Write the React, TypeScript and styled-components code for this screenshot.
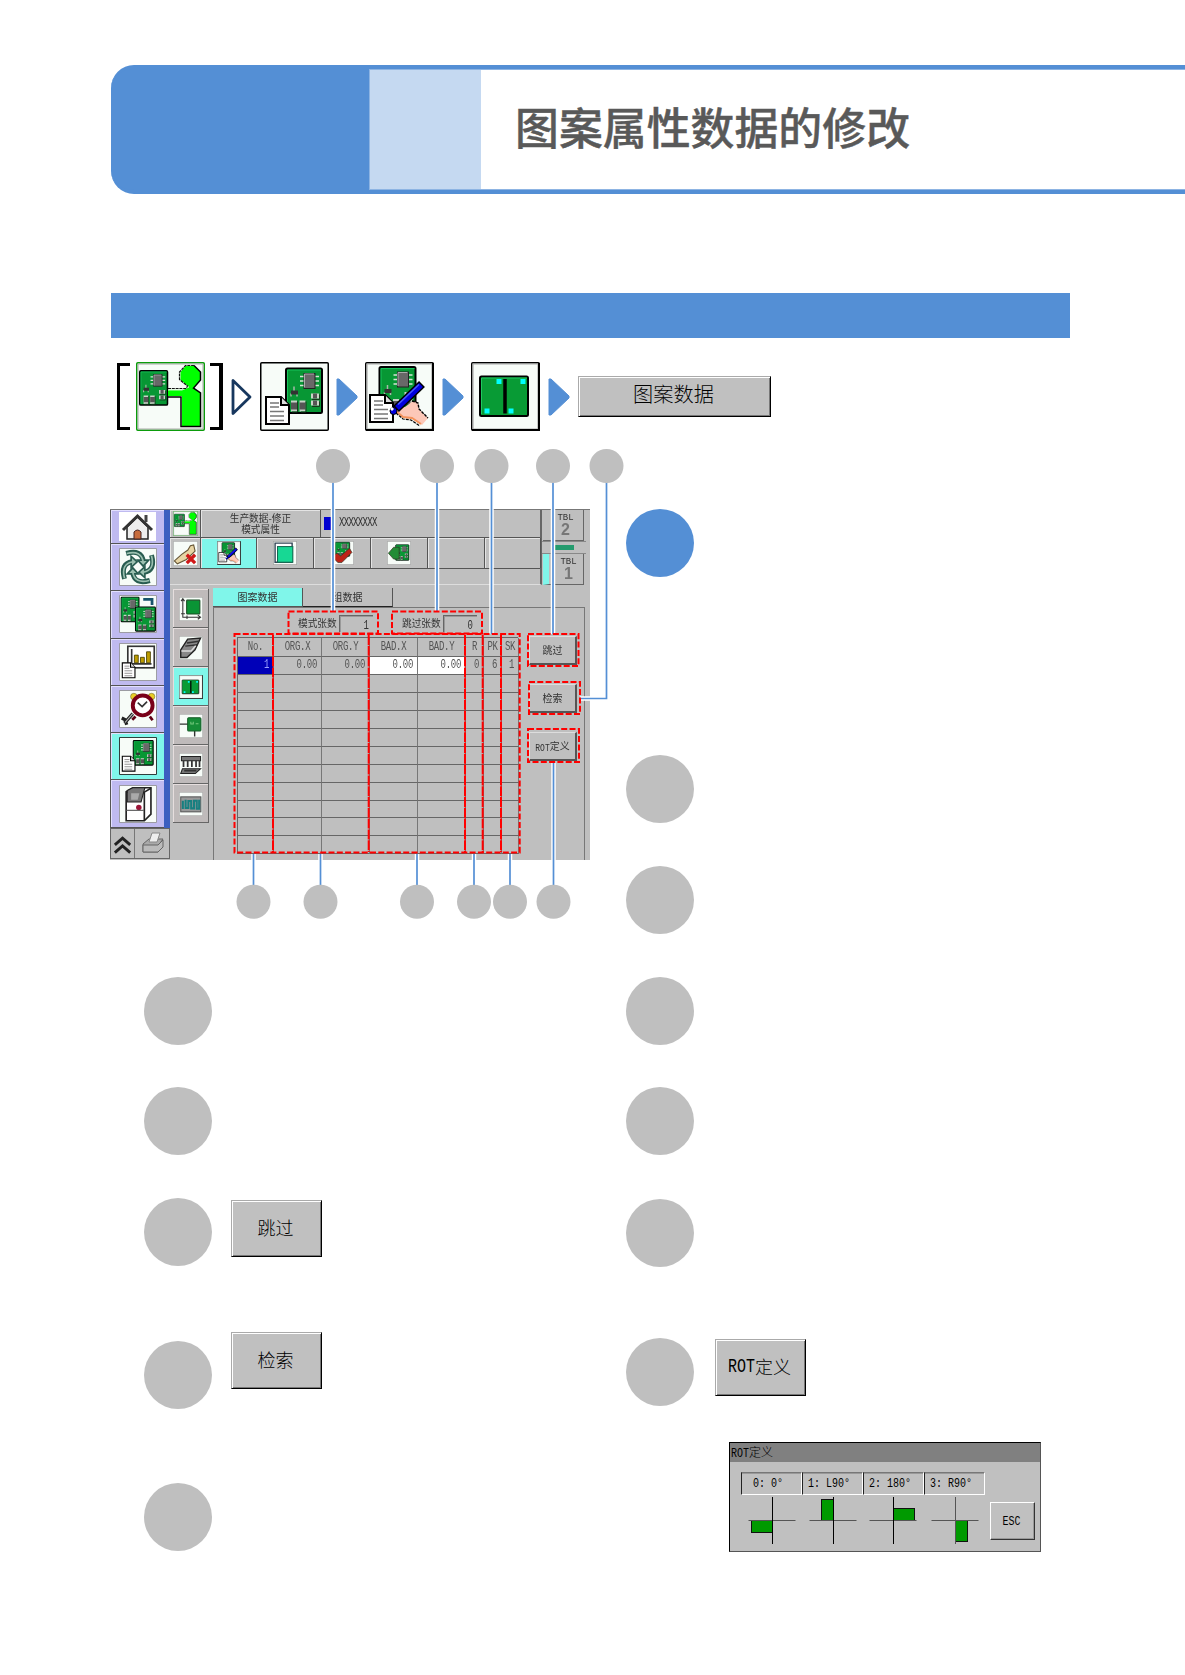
import { ReactNode } from 'react'
import styled, { createGlobalStyle } from 'styled-components'

const BLUE = '#548fd5'
const GREY = '#bfbfbf'
const CYAN = '#80f6ea'

interface BoxProps {
  $top?: number
  $left?: number
  $width?: number
  $height?: number
  $active?: boolean
  $size?: number
}

const GlobalStyle = createGlobalStyle`
  * {
    box-sizing: border-box;
  }

  body {
    margin: 0;
    background: #fff;
    font-family: 'Liberation Sans', 'Noto Sans CJK SC', sans-serif;
    color: #000;
  }

  svg {
    display: block;
    flex: none;
  }
`

const Page = styled.main`
  width: 1185px;
  height: 1675px;
  padding: 65px 0 0 111px;
  overflow: hidden;
`

const Header = styled.header`
  display: flex;
  height: 129px;
  border: solid ${BLUE};
  border-width: 4px 0 4px 0;
  border-radius: 23px 0 0 23px;
  background: linear-gradient(to right, ${BLUE} 258px, #fff 258px);
`

const HeaderTint = styled.div`
  width: 112px;
  margin-left: 258px;
  background: #c5d9f1;
  border: 1px solid #8db4e3;
  border-right: 0;
`

const Title = styled.h1`
  flex: 1;
  margin: 0;
  padding-left: 34px;
  font: 500 43.9px/113px 'Noto Sans CJK SC', sans-serif;
  color: #595959;
  white-space: nowrap;
  -webkit-text-stroke: 0.4px #595959;
  border: solid #8db4e3;
  border-width: 1px 0;
`

const SectionBar = styled.div`
  width: 959px;
  height: 45px;
  margin-top: 99px;
  background: ${BLUE};
`

const Steps = styled.nav`
  display: flex;
  align-items: center;
  height: 69px;
  margin-top: 24px;
  padding-left: 6px;
`

const Bracket = styled.span<{ $close?: boolean }>`
  width: 13px;
  height: 67px;
  border: 3px solid #000;
  border-left-width: ${({ $close }) => ($close ? 0 : 3)}px;
  border-right-width: ${({ $close }) => ($close ? 4 : 0)}px;
  margin: ${({ $close }) => ($close ? '0 1px 0 5px' : '0 6px 0 0')};
`

const Arrow = styled.svg<{ $before: number; $after: number }>`
  width: 22px;
  height: 38px;
  margin: 0 ${({ $after }) => $after}px 0 ${({ $before }) => $before}px;
`

const Button = styled.button<BoxProps>`
  display: flex;
  align-items: center;
  justify-content: center;
  flex: none;
  width: ${({ $width }) => $width || 91}px;
  height: ${({ $height }) => $height || 57}px;
  margin: ${({ $top }) => $top || 0}px 0 0 ${({ $left }) => $left || 0}px;
  padding: 0 2px 4px 0;
  border: 1px solid;
  border-color: #aaa #000 #000 #aaa;
  box-shadow: inset 1px 1px #fff, inset -1px -1px #777;
  background: #c0c0c0;
  color: #000;
  font: 300 ${({ $size }) => $size || 18}px/1 'Noto Sans CJK SC', sans-serif;
`

const HalfWidth = styled.span<{ $size: number; $shift?: number }>`
  display: inline-block;
  font: ${({ $size }) => $size}px/1 'Liberation Mono', monospace;
  transform: translateY(${({ $shift }) => $shift || 0}px) scaleY(1.35);
`

const Columns = styled.div`
  display: flex;
  margin-top: 18px;
`

const Column = styled.section<{ $width: number }>`
  display: flex;
  flex-direction: column;
  width: ${({ $width }) => $width}px;
`

const Figure = styled.figure`
  position: relative;
  width: 515px;
  height: 470px;
  margin: 0;
  padding-top: 60px;
`

const Overlay = styled.svg`
  position: absolute;
  left: -1px;
  top: 0;
`

const Note = styled.div<BoxProps>`
  display: flex;
  align-items: flex-start;
  height: 68px;
  margin: ${({ $top }) => $top}px 0 0 ${({ $left }) => $left || 0}px;
`

const Bullet = styled.span<BoxProps>`
  flex: none;
  width: 68px;
  height: 68px;
  border-radius: 50%;
  background: ${({ $active }) => ($active ? BLUE : GREY)};
`

/* machine screen */

const Screen = styled.div`
  display: flex;
  width: 480px;
  height: 351px;
  margin-left: -1px;
  background: #bfbfbf;
  border-top: 1px solid #777;
  filter: blur(0.5px);
  font: 10px/1 'Noto Sans CJK SC', sans-serif;
  color: #333;
`

const Nav = styled.div`
  width: 60px;
  flex: none;
`

const NavList = styled.div`
  border-right: 6px solid #3c5fc0;
  border-left: 1px solid #555;
`

const NavCell = styled.div<BoxProps>`
  display: flex;
  align-items: center;
  justify-content: center;
  height: ${({ $height }) => $height || 47.3}px;
  border-bottom: 1px solid #555;
  box-shadow: inset 1px 1px #e3e0ff;
  background: ${({ $active }) => ($active ? CYAN : '#bfbaf0')};
`

const NavFoot = styled.div`
  display: grid;
  grid-template-columns: 24px 36px;
  height: 31px;
  place-items: center;
  border: 1px solid #666;

  svg:first-child {
    border-right: 1px solid #777;
  }
`

const Main = styled.div`
  flex: 1;
  min-width: 0;
`

const Top = styled.div`
  display: flex;
  height: 75px;
`

const TopLeft = styled.div`
  width: 372px;
  height: 75px;
  border-right: 2px solid #666;
  border-bottom: 1px solid #ddd;
`

const Bar = styled.div<BoxProps>`
  display: flex;
  height: ${({ $height }) => $height}px;
  border-bottom: 1px solid #555;
`

const BarCell = styled.div<BoxProps>`
  display: flex;
  flex-direction: column;
  align-items: center;
  justify-content: center;
  width: ${({ $width }) => $width}px;
  flex: none;
  border-right: 1px solid #555;
  box-shadow: inset 1px 1px #e4e4e4;
  background: ${({ $active }) => ($active ? CYAN : '#bfbfbf')};
`

const BarLine = styled.span`
  font-size: 9.7px;
  line-height: 10.5px;
`

const Model = styled.div`
  display: flex;
  align-items: center;
  padding-left: 3px;
  gap: 6px;
  letter-spacing: -0.7px;

  &:before {
    content: '';
    width: 9px;
    height: 13px;
    background: #0000d0;
  }
`

const Tables = styled.div`
  display: flex;
  flex-direction: column;
  align-items: center;
  width: 48px;
  padding-right: 5px;
`

const TableTag = styled.div<BoxProps>`
  width: 41px;
  height: 31px;
  padding: 4px 0 0 5px;
  border: solid #666;
  border-width: 0 1px 1px 0;
  border-left: ${({ $active }) => ($active ? `6px solid ${CYAN}` : '0')};
  text-align: center;
  font: 9px/8px 'Liberation Mono', monospace;

  b {
    display: block;
    font: 700 16px/16px 'Liberation Sans', sans-serif;
    color: #777;
  }
`

const Exchange = styled.div`
  width: 44px;
  height: 13px;
  padding: 3px 12px;
  border: solid #888;
  border-width: 1px 0;
  background: #259b6e content-box;
`

const Lower = styled.div`
  display: flex;
  height: 275px;
`

const Side = styled.div`
  width: 43px;
  padding: 4px 4px 0 3px;
`

const SideCell = styled.div<BoxProps>`
  display: flex;
  align-items: center;
  justify-content: center;
  height: 39px;
  padding-top: 1px;
  border: solid #666;
  border-width: 0 1px 1px 0;
  box-shadow: inset 1px 1px #e6dede;
  background: ${({ $active }) => ($active ? CYAN : '#bfbaba')};
`

const Work = styled.div`
  width: 372px;
`

const Tabs = styled.div`
  display: flex;
  height: 22px;
  padding-top: 3px;
`

const Tab = styled.div<BoxProps>`
  width: 90px;
  border-right: 1px solid #555;
  border-bottom: 1px solid ${({ $active }) => ($active ? '#555' : '#222')};
  background: ${({ $active }) => ($active ? CYAN : '#bfbfbf')};
  text-align: center;
  line-height: 18px;
`

const Panel = styled.div`
  height: 253px;
  border: solid #777;
  border-width: 1px 1px 0 1px;
`

const Counts = styled.div`
  display: flex;
  gap: 14px;
  height: 28px;
  padding: 6px 0 0 74px;
`

const Count = styled.div`
  display: flex;
  align-items: center;
  justify-content: space-between;
  width: 90px;
  height: 18px;
  padding: 1px 5px 0 10px;
  font-size: 9.7px;
  white-space: nowrap;
`

const CountValue = styled.span`
  width: 34px;
  height: 17px;
  padding: 4px 4px 0 0;
  border: solid #666;
  border-width: 1px 0 0 1px;
  box-shadow: inset 1px 1px #999;
  text-align: right;
`

const WorkBody = styled.div`
  display: flex;
  align-items: flex-start;
`

const DataGrid = styled.div`
  display: grid;
  grid-template-columns: 36px 48px 48px 48px 48px 18px 18px 17px;
  grid-template-rows: 19px repeat(11, 17.95px);
  width: 281px;
  margin: 1px 0 0 23px;
  border-left: 1px solid #666;
  border-top: 1px solid #666;
`

const Cell = styled.div<{ $fill?: string; $head?: boolean }>`
  border-right: 1px solid #777;
  border-bottom: 1px solid #666;
  padding: ${({ $head }) => ($head ? '2px 0 0' : '1px 4px 0 0')};
  background: ${({ $fill }) => $fill || 'transparent'};
  color: ${({ $fill }) => ($fill === '#0000b8' ? '#9aa0ff' : '#555')};
  line-height: 9px;
  letter-spacing: -0.3px;
  text-align: ${({ $head }) => ($head ? 'center' : 'right')};
  overflow: hidden;
`

const Keys = styled.div`
  display: flex;
  flex-direction: column;
  gap: 19px;
  margin-left: 11px;
`

const Key = styled.div`
  width: 48px;
  height: 29px;
  border: solid;
  border-width: 1px 2px 2px 1px;
  border-color: #ddd #555 #555 #ddd;
  text-align: center;
  line-height: 26px;
  white-space: nowrap;
`

/* rotation dialog */

const Dialog = styled.div`
  width: 312px;
  height: 110px;
  margin: 36px 0 0 103px;
  border: 1px solid #555;
  border-left-color: #000;
  border-top-color: #000;
  background: #c0c0c0;
  font: 300 12px/1 'Noto Sans CJK SC', sans-serif;
`

const DialogTitle = styled.div`
  height: 19px;
  padding: 3px 0 0 1px;
  background: #808080;
`

const DialogBody = styled.div`
  display: flex;
  padding: 10px 0 0 11px;
`

const Rotation = styled.div`
  width: 61px;
`

const RotationLabel = styled.div`
  height: 23px;
  border: 1px solid;
  border-color: #777 #fff #fff #222;
  box-shadow: inset 0 1px #999;
  padding: 5px 7px 0 0;
  text-align: center;
  white-space: pre;
`

const Esc = styled.div`
  width: 45px;
  height: 38px;
  margin: 30px 0 0 5px;
  padding-right: 2px;
  border: 1px solid;
  border-color: #fff #333 #333 #fff;
  box-shadow: inset -1px -1px #999;
  text-align: center;
  line-height: 36px;
`

const Pcb = ({ x = 0, y = 0, sx = 1, sy = 1 }) => (
  <g transform={`translate(${x} ${y}) scale(${sx} ${sy})`}>
    <rect x="1" y="1" width="36" height="44.5" rx="1.5" fill="#079734" stroke="#000" strokeWidth="2" />
    <path d="M2.5 44V2.5H36" fill="none" stroke="#16c35a" />
    <path d="M15 9h19M15 13.5h19M15 18h19" stroke="#d5e5d5" strokeWidth="1.6" />
    <rect x="19" y="6" width="11" height="15" fill="#686868" stroke="#222" />
    <path d="M19.5 20V6.5H29" fill="none" stroke="#aaa" />
    <path d="M9 19v5M6 29v-3M12 29v-3" stroke="#a8b8a8" strokeWidth="1.5" />
    <path d="M6 23h7v4H6z" fill="#333" />
    <path d="M6 33h6v11H6zM14.5 33h6v11h-6zM26 26h8v5h-8zM26 33h8v5h-8z" fill="#c8d4c8" />
    <path d="M6 35h6v7H6zM14.5 35h6v7h-6zM28 26h4v5h-4zM28 33h4v5h-4z" fill="#555" />
    <path d="M12.5 34v10.5H7M21 34v10.5h-5M34.5 27v5H27M34.5 34v5H27" fill="none" stroke="#153a1c" />
  </g>
)

const Doc = ({ x = 0, y = 0 }) => (
  <g transform={`translate(${x} ${y})`}>
    <path d="M1 1h15l8 8v19H1z" fill="#fff" stroke="#000" strokeWidth="2" />
    <path d="M16 1v8h8" fill="#ddd" stroke="#000" strokeWidth="2" />
    <path d="M5 7h9M5 11h9M5 15.5h14M5 20h14M5 24.5h14" stroke="#777" strokeWidth="1.4" />
  </g>
)

interface FrameProps {
  children: ReactNode
  size?: number
  stroke?: string
  bevel?: boolean
}

const Frame = ({ children, size = 69, stroke = '#000', bevel }: FrameProps) => (
  <svg width={size} height={size} viewBox="0 0 69 69">
    <rect x="0.75" y="0.75" width="67.5" height="67.5" rx="1" fill="#f7fcf8" stroke={stroke} strokeWidth="1.5" />
    {bevel && <path d="M2 67V2h65v65z" fill="none" stroke="#aaa" strokeWidth="1.2" />}
    {bevel && <path d="M1 68h67V1" fill="none" stroke="#000" strokeWidth="2" />}
    {children}
  </svg>
)

const Operator = ({ size = 69 }) => (
  <Frame size={size} stroke="#0b9c0b">
    <path d="M2 2h65v65H2z" fill="none" stroke="#aaa" />
    <Pcb x={3} y={8} sx={0.77} sy={0.77} />
    <path d="M49.5 4h9l6 6v8l-7 8 6.5 5v33H46V34H32v-6h14l7-3-8.5-7v-8z" fill="#0f0" />
    <path d="M32 28h14l7-3" fill="none" stroke="#c8f8c8" />
    <path d="M58 3.5l6.5 6.5v8L57.5 26l7 5v33.5H45V35H32" fill="none" stroke="#000" strokeWidth="1.5" />
    <path
      d="M32 26.5h18l1.5-2.5-8-6.5V10l6-6.5h9"
      fill="none"
      stroke="#111"
      strokeWidth="1.2"
      strokeDasharray="3 0.8"
    />
  </Frame>
)

const BoardDoc = ({ size = 69 }) => (
  <Frame size={size}>
    <Pcb x={25} y={5.5} />
    <Doc x={5} y={34} />
  </Frame>
)

const BoardEdit = ({ size = 69 }) => (
  <Frame size={size} bevel>
    <Pcb x={13.5} y={4} />
    <Doc x={4} y={32} />
    <path d="M31 46l9-1 8-6 5 2 1 6 9 9-6 7-9-6-9-1-8-6z" fill="#fcc8b8" />
    <path d="M47 39l6 2 1 6 9 9" fill="none" stroke="#000" strokeWidth="1.4" strokeDasharray="3 1" />
    <path d="M31 49l7 6 9 1 9 6" fill="none" stroke="#f5935c" strokeWidth="2" />
    <path d="M31 51l7 6 8 1 9 6" fill="none" stroke="#000" strokeWidth="1.2" strokeDasharray="3 1" />
    <path d="M57 22L31 47" stroke="#000" strokeWidth="8.5" />
    <path d="M56 23L32 46" stroke="#00d" strokeWidth="5.5" />
    <path d="M54 22.5L33 42.5" stroke="#4858ff" strokeWidth="1.5" />
    <circle cx="28.5" cy="49" r="3.5" fill="#00d" stroke="#000" />
    <path d="M25 47l2-2 2 2-2 2z" fill="#fff" />
  </Frame>
)

const BoardSplit = ({ size = 69 }) => (
  <Frame size={size} bevel>
    <rect x="9" y="14.5" width="48" height="39.5" rx="1.5" fill="#089b35" stroke="#000" strokeWidth="2" />
    <path d="M10.5 52V16H56" fill="none" stroke="#20c860" />
    <path d="M34 17v34.5" stroke="#000" strokeWidth="3.5" />
    <path d="M25.5 17h5v5h-5zM49.5 17h5v5h-5zM13.5 46.5h5v5h-5zM37.5 46.5h5v5h-5z" fill="#0ff" />
  </Frame>
)

const Home = () => (
  <svg width="37" height="29" viewBox="0 0 37 29">
    <rect width="37" height="29" fill="#fff" />
    <path d="M8 15v12h21V15L18.5 5z" fill="#eee" stroke="#222" strokeWidth="1.5" />
    <path d="M4 18L18.5 4 33 18" fill="none" stroke="#333" strokeWidth="3" />
    <path d="M27 3v7" stroke="#444" strokeWidth="3" />
    <path d="M15 27v-7q3.5-4 7 0v7z" fill="#c66b3d" stroke="#422" />
  </svg>
)

const turns = [0, 90, 180, 270]

const Cycle = () => (
  <Frame size={38} stroke="#888">
    {turns.map((turn) => (
      <g key={turn} transform={`rotate(${turn} 34.5 34.5)`}>
        <path d="M13 10q28-8 31 14" fill="none" stroke="#285c50" strokeWidth="9" />
        <path d="M34 22h20l-10 11z" fill="#9cc0b0" stroke="#285c50" strokeWidth="3" />
        <path d="M14 10q26-7 30 15" fill="none" stroke="#9cc0b0" strokeWidth="3" />
      </g>
    ))}
  </Frame>
)

const Boards = () => (
  <Frame size={38} stroke="#888">
    <Pcb x={3} y={3} sx={0.9} sy={1} />
    <path d="M44 8h16v10" fill="none" stroke="#17536c" strokeWidth="5" />
    <Pcb x={29} y={21} sx={1} sy={0.98} />
  </Frame>
)

const Report = () => (
  <Frame size={38} stroke="#888">
    <rect x="16" y="6" width="48" height="39" fill="#fff" stroke="#333" strokeWidth="3" />
    <path d="M23 11v27h36" fill="none" stroke="#333" strokeWidth="3" />
    <path d="M28 22h7v14h-7zM39 26h7v10h-7zM50 16h7v20h-7z" fill="#bd9c00" stroke="#443b00" strokeWidth="1.5" />
    <Doc x={5} y={35} />
  </Frame>
)

const Alarm = () => (
  <Frame size={38} stroke="#888">
    <path d="M30 48l-6 6M56 48l5 7" stroke="#600015" strokeWidth="5" />
    <circle cx="27" cy="12" r="6" fill="#e9cd25" stroke="#663" />
    <circle cx="59" cy="12" r="6" fill="#e9cd25" stroke="#663" />
    <circle cx="43" cy="28" r="18" fill="#fff" stroke="#790019" strokeWidth="7" />
    <path d="M34 23l8 7 9-9" fill="none" stroke="#333" strokeWidth="3" />
    <path d="M25 43L10 60M5 51l6 3 3 9" fill="none" stroke="#222" strokeWidth="6" />
    <path d="M25 43L11 59" stroke="#bbb" strokeWidth="2" />
  </Frame>
)

const Machine = () => (
  <Frame size={38} stroke="#888">
    <path d="M13 12L25 5h33v48L46 65H13z" fill="#fff" stroke="#222" strokeWidth="3" />
    <path d="M13 13h33v51M46 13L58 6" fill="none" stroke="#222" strokeWidth="3" />
    <path d="M15 10l10-5h22L40 31H15z" fill="#777" stroke="#222" strokeWidth="2" />
    <path d="M22 15h15l-3 12H22z" fill="#aaa" />
    <circle cx="36" cy="41" r="5" fill="#9c1538" />
    <path d="M13 46h32" stroke="#555" strokeWidth="2" />
  </Frame>
)

const Cancel = () => (
  <Frame size={25} stroke="#888">
    <path d="M4 55l20-18 17-12 7-12 9-2 4 17-24 23-25 12z" fill="#e8d5a4" stroke="#665535" strokeWidth="3" />
    <path d="M38 38l23 23M61 38L38 61" stroke="#d01818" strokeWidth="9" />
  </Frame>
)

const Solid = () => (
  <Frame size={24} stroke="#666">
    <path d="M6 17V6h49v55H6z" fill="#fff" stroke="#345" strokeWidth="4" />
    <rect x="13" y="16" width="44" height="45" fill="#17d894" stroke="#146950" strokeWidth="3" />
  </Frame>
)

const BoardMark = ({ left = false }) => (
  <Frame size={24} stroke="#777">
    {left ? <Pcb x={24} y={10} sx={1.05} /> : <Pcb x={14} y={3} sx={1.15} sy={0.9} />}
    <path
      d={left ? 'M4 35l15-17h16v34H19z' : 'M5 45l15-10 11 8 25-22 7 12-29 29H23z'}
      fill={left ? '#238c36' : '#bd2318'}
      stroke="#332"
      strokeWidth="2"
    />
  </Frame>
)

const BoardArea = () => (
  <Frame size={24} stroke="#888">
    <rect x="22" y="9" width="38" height="40" rx="2" fill="#0a9435" stroke="#174c22" strokeWidth="3" />
    <path d="M11 8v50h48M6 12l5-7 5 7M6 48h11M23 53v10M54 52l8 6-8 6" fill="none" stroke="#333" strokeWidth="3" />
  </Frame>
)

const Feeder = () => (
  <Frame size={24} stroke="#888">
    <path d="M5 40L25 9l37-3-16 34-23 22H5z" fill="#888" stroke="#222" strokeWidth="4" />
    <path d="M18 29l35-4M23 20l34-5" fill="none" stroke="#333" strokeWidth="4" />
    <path d="M7 43h28l13-15" fill="none" stroke="#ddd" strokeWidth="4" />
  </Frame>
)

const BoardPin = () => (
  <Frame size={24} stroke="#888">
    <path d="M2 29h24M45 47v18" stroke="#333" strokeWidth="4" />
    <rect x="25" y="11" width="38" height="38" rx="3" fill="#168d37" stroke="#145a26" strokeWidth="3" />
    <path d="M34 22v7h7v-7M48 28h8" fill="none" stroke="#75c97e" strokeWidth="3" />
  </Frame>
)

const Nozzles = () => (
  <Frame size={24} stroke="#888">
    <path d="M7 10h55v12H7zM10 45l-5 14h42l15-14z" fill="#777" stroke="#222" strokeWidth="3" />
    <path d="M13 22v18M25 22v18M37 22v18M49 22v18M59 22v18M15 51h35" stroke="#333" strokeWidth="5" />
  </Frame>
)

const Wave = () => (
  <Frame size={24} stroke="#888">
    <rect x="5" y="14" width="58" height="43" fill="#999" stroke="#555" strokeWidth="3" />
    <path d="M11 25v24M19 22v24h8V26h8v21h8V25h8v23h7V22" fill="none" stroke="#177f80" strokeWidth="6" />
  </Frame>
)

const NextArrow = ({ hollow = false, before = 7, after = 7 }) => (
  <Arrow viewBox="0 0 22 38" $before={before} $after={after}>
    <path
      d={hollow ? 'M2 2.5v33L19 19z' : 'M1 1h2l18 17v2L3 37H1z'}
      fill={hollow ? '#fff' : BLUE}
      stroke={hollow ? '#17375e' : BLUE}
      strokeWidth={hollow ? 2.8 : 1}
      strokeLinejoin="round"
    />
  </Arrow>
)

const rows = ['1', '0.00', '0.00', '0.00', '0.00', '0', '6', '1']
const heads = ['No.', 'ORG.X', 'ORG.Y', 'BAD.X', 'BAD.Y', 'R', 'PK', 'SK']
const fills = ['#0000b8', '', '', '#fff', '#fff', '', '', '']

const MachineScreen = () => (
  <Screen>
    <Nav>
      <NavList>
        <NavCell $height={34}><Home /></NavCell>
        <NavCell><Cycle /></NavCell>
        <NavCell><Boards /></NavCell>
        <NavCell><Report /></NavCell>
        <NavCell><Alarm /></NavCell>
        <NavCell $active><BoardDoc size={38} /></NavCell>
        <NavCell><Machine /></NavCell>
      </NavList>
      <NavFoot>
        <svg width="23" height="29" viewBox="0 0 23 29">
          <path d="M3 16l8-7 8 7M3 24l8-7 8 7" fill="none" stroke="#222" strokeWidth="3" />
        </svg>
        <svg width="26" height="24" viewBox="0 0 26 24">
          <path d="M3 13l6-5h14l-5 7v6H3z" fill="#aaa" stroke="#666" />
          <path d="M9 11l3-9h8l-3 9z" fill="#eee" stroke="#888" />
          <path d="M3 14h15l5-5v7l-5 5H3z" fill="#bbb" stroke="#666" />
        </svg>
      </NavFoot>
    </Nav>
    <Main>
      <Top>
        <TopLeft>
          <Bar $height={28}>
            <BarCell $width={31}><Operator size={25} /></BarCell>
            <BarCell $width={120}>
              <BarLine>生产数据-修正</BarLine>
              <BarLine>模式属性</BarLine>
            </BarCell>
            <Model>
              <HalfWidth $size={9} $shift={0.5}>XXXXXXXX</HalfWidth>
            </Model>
          </Bar>
          <Bar $height={31}>
            <BarCell $width={31}><Cancel /></BarCell>
            <BarCell $width={56} $active><BoardEdit size={24} /></BarCell>
            <BarCell $width={57}><Solid /></BarCell>
            <BarCell $width={57}><BoardMark /></BarCell>
            <BarCell $width={57}><BoardMark left /></BarCell>
            <BarCell $width={57} />
            <BarCell $width={56} />
          </Bar>
        </TopLeft>
        <Tables>
          <TableTag>TBL<b>2</b></TableTag>
          <Exchange />
          <TableTag $active>TBL<b>1</b></TableTag>
        </Tables>
      </Top>
      <Lower>
        <Side>
          <SideCell><BoardArea /></SideCell>
          <SideCell><Feeder /></SideCell>
          <SideCell $active><BoardSplit size={24} /></SideCell>
          <SideCell><BoardPin /></SideCell>
          <SideCell><Nozzles /></SideCell>
          <SideCell><Wave /></SideCell>
        </Side>
        <Work>
          <Tabs>
            <Tab $active>图案数据</Tab>
            <Tab>组数据</Tab>
          </Tabs>
          <Panel>
            <Counts>
              <Count>
                模式张数
                <CountValue><HalfWidth $size={9}>1</HalfWidth></CountValue>
              </Count>
              <Count>
                跳过张数
                <CountValue><HalfWidth $size={9}>0</HalfWidth></CountValue>
              </Count>
            </Counts>
            <WorkBody>
              <DataGrid>
                {heads.map((head) => (
                  <Cell key={head} $head>
                    <HalfWidth $size={9}>{head}</HalfWidth>
                  </Cell>
                ))}
                {rows.map((value, i) => (
                  <Cell key={i} $fill={fills[i]}>
                    <HalfWidth $size={9}>{value}</HalfWidth>
                  </Cell>
                ))}
                {Array.from({ length: 80 }, (_, i) => (
                  <Cell key={i} />
                ))}
              </DataGrid>
              <Keys>
                <Key>跳过</Key>
                <Key>检索</Key>
                <Key>
                  <HalfWidth $size={8}>ROT</HalfWidth>定义
                </Key>
              </Keys>
            </WorkBody>
          </Panel>
        </Work>
      </Lower>
    </Main>
  </Screen>
)

// circle x, circle y, leader path
const callouts: [number, number, string][] = [
  [223, 17, 'M223 33V162'],
  [327, 17, 'M327 33V163'],
  [381.5, 17, 'M381.5 33V185'],
  [443, 17, 'M443 33V185'],
  [496.5, 17, 'M496.5 33V249.5H470'],
  [143.5, 452.7, 'M143.5 405V437'],
  [210.5, 452.7, 'M210.5 405V437'],
  [307, 452.7, 'M307 405V437'],
  [364, 452.7, 'M364 405V437'],
  [400, 452.7, 'M400 405V437'],
  [443.5, 452.7, 'M443.5 314V437'],
]

const Callouts = () => (
  <Overlay width="516" height="470" viewBox="0 0 516 470">
    <g fill="none" stroke="#fff" strokeWidth="4.5">
      {callouts.map(([, , path]) => (
        <path key={path} d={path} />
      ))}
    </g>
    <g fill="none" stroke={BLUE} strokeWidth="1.7">
      {callouts.map(([, , path]) => (
        <path key={path} d={path} />
      ))}
    </g>
    <g fill="none" stroke="#f00" strokeWidth="2" strokeDasharray="6 2.3">
      <path d="M178.5 162.5h89.5v22h-89.5zM282 162.5h90v22h-90z" />
      <path d="M418 185h50.5v32H418zM419 233h51v32h-51zM418 280h51v33h-51z" />
      <path d="M124.5 185h285.2v218.5H124.5z" />
    </g>
    <g stroke="#f00" strokeWidth="2" strokeDasharray="10 0.8">
      <path d="M163 186v217M258.7 186v217M355 186v217M372.7 186v217M391 186v217" />
    </g>
    <g fill={GREY}>
      {callouts.map(([x, y, path]) => (
        <circle key={path} cx={x} cy={y} r="17" />
      ))}
    </g>
  </Overlay>
)

const rotations = [
  { label: '0: 0°', cx: 31.5, box: [10.5, 25.5, 21, 12] },
  { label: '1: L90°', cx: 31.5, box: [19.5, 4.5, 12, 21] },
  { label: '2: 180°', cx: 30.5, box: [30.5, 13.5, 21, 12] },
  { label: '3: R90°', cx: 31.5, box: [31.5, 25.5, 12, 21] },
]

const RotationDialog = () => (
  <Dialog>
    <DialogTitle>
      <HalfWidth $size={10} $shift={-1}>ROT</HalfWidth>定义
    </DialogTitle>
    <DialogBody>
      {rotations.map(({ label, cx, box: [x, y, w, h] }) => (
        <Rotation key={label}>
          <RotationLabel>
            <HalfWidth $size={10} $shift={-2.5}>{label}</HalfWidth>
          </RotationLabel>
          <svg width="61" height="52" viewBox="0 0 61 52">
            <rect x={x} y={y} width={w} height={h} fill="#009a00" stroke="#111" />
            <path d={`M${cx - 24} 25.5h47`} stroke="#555" />
            <path d={`M${cx} 2v47`} stroke={label.startsWith('3') ? '#555' : '#000'} />
          </svg>
        </Rotation>
      ))}
      <Esc>
        <HalfWidth $size={10} $shift={-2}>ESC</HalfWidth>
      </Esc>
    </DialogBody>
  </Dialog>
)

const App = () => (
  <Page>
    <GlobalStyle />
    <Header>
      <HeaderTint />
      <Title>图案属性数据的修改</Title>
    </Header>
    <SectionBar />
    <Steps>
      <Bracket />
      <Operator />
      <Bracket $close />
      <NextArrow hollow />
      <BoardDoc />
      <NextArrow />
      <BoardEdit />
      <NextArrow before={8} />
      <BoardSplit />
      <NextArrow before={8} after={8} />
      <Button $width={193} $height={41} $size={20.2}>图案数据</Button>
    </Steps>
    <Columns>
      <Column $width={515}>
        <Figure>
          <MachineScreen />
          <Callouts />
        </Figure>
        <Note $top={58} $left={32.5}><Bullet /></Note>
        <Note $top={42} $left={32.5}><Bullet /></Note>
        <Note $top={43} $left={32.5}>
          <Bullet />
          <Button $top={2} $left={19.5}>跳过</Button>
        </Note>
        <Note $top={74.5} $left={32.5}>
          <Bullet />
          <Button $top={-8.5} $left={19.5}>检索</Button>
        </Note>
        <Note $top={74.5} $left={32.5}><Bullet /></Note>
      </Column>
      <Column $width={483}>
        <Note $top={60}><Bullet $active /></Note>
        <Note $top={178}><Bullet /></Note>
        <Note $top={43}><Bullet /></Note>
        <Note $top={43}><Bullet /></Note>
        <Note $top={42}><Bullet /></Note>
        <Note $top={44}><Bullet /></Note>
        <Note $top={71}>
          <Bullet />
          <Button $top={1} $left={21}>
            <HalfWidth $size={15} $shift={2}>ROT</HalfWidth>定义
          </Button>
        </Note>
        <RotationDialog />
      </Column>
    </Columns>
  </Page>
)

export default App
